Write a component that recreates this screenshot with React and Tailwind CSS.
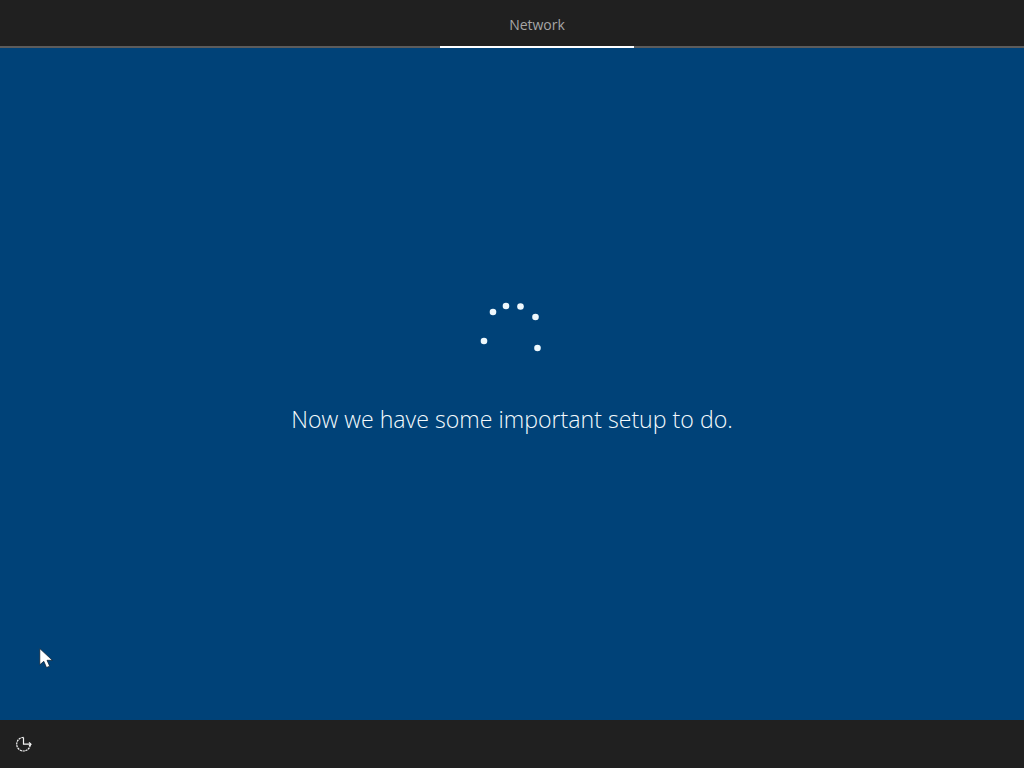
const dots = [
  [4, 41],
  [13, 12],
  [26, 6],
  [40.5, 6.5],
  [55.5, 17],
  [57.5, 48],
];

const Spinner = () => (
  <svg width="64" height="56" viewBox="0 0 64 56" className="block">
    {dots.map(([cx, cy]) => (
      <circle key={cx} cx={cx} cy={cy} r="3.3" fill="#eef8fd" />
    ))}
  </svg>
);

const PowerIcon = () => (
  <svg width="18" height="18" viewBox="0 0 18 18" fill="none" stroke="#f2f2f2" strokeWidth="1.2">
    <path d="M8.5 2.4a6.8 6.8 0 1 0 6.8 6.8" strokeDasharray="2.2 0.7" />
    <path d="M8.5 2.4V9.2H16" />
    <path d="M14 7.4l2 1.8-2 1.8" />
  </svg>
);

const Cursor = () => (
  <svg width="14" height="21" viewBox="0 0 14 21" className="absolute left-[39px] top-[648px]">
    <path d="M.8.6v16.2l4-3.5 2.7 6.2 3.2-1.3-2.7-5.9h5.4z" fill="#fff" stroke="#0a1a2a" strokeWidth="0.7" />
  </svg>
);

export default function App() {
  return (
    <div className="relative flex flex-col h-[768px] w-[1024px] overflow-hidden bg-[#004278] font-['Open_Sans','Noto_Sans',sans-serif]">
      {/* Top bar */}
      <div className="flex h-[48px] flex-col bg-[#202020]">
        <div className="flex h-[46px] items-center justify-center pt-[2px] pl-[50px] text-[14px] text-[#a6a6a6]">
          Network
        </div>
        <div className="flex h-[2px] bg-[#5c5c5c] pl-[440px]">
          <div className="w-[194px] bg-white" />
        </div>
      </div>

      {/* Main */}
      <div className="flex flex-1 flex-col items-center pt-[252px]">
        <Spinner />
        <p className="mt-[47px] text-[23.15px] font-light leading-[32px] text-[#f4fafd]">
          Now we have some important setup to do.
        </p>
      </div>

      {/* Bottom bar */}
      <div className="flex h-[48px] items-center bg-[#202020] pl-[15px]">
        <PowerIcon />
      </div>

      <Cursor />
    </div>
  );
}
